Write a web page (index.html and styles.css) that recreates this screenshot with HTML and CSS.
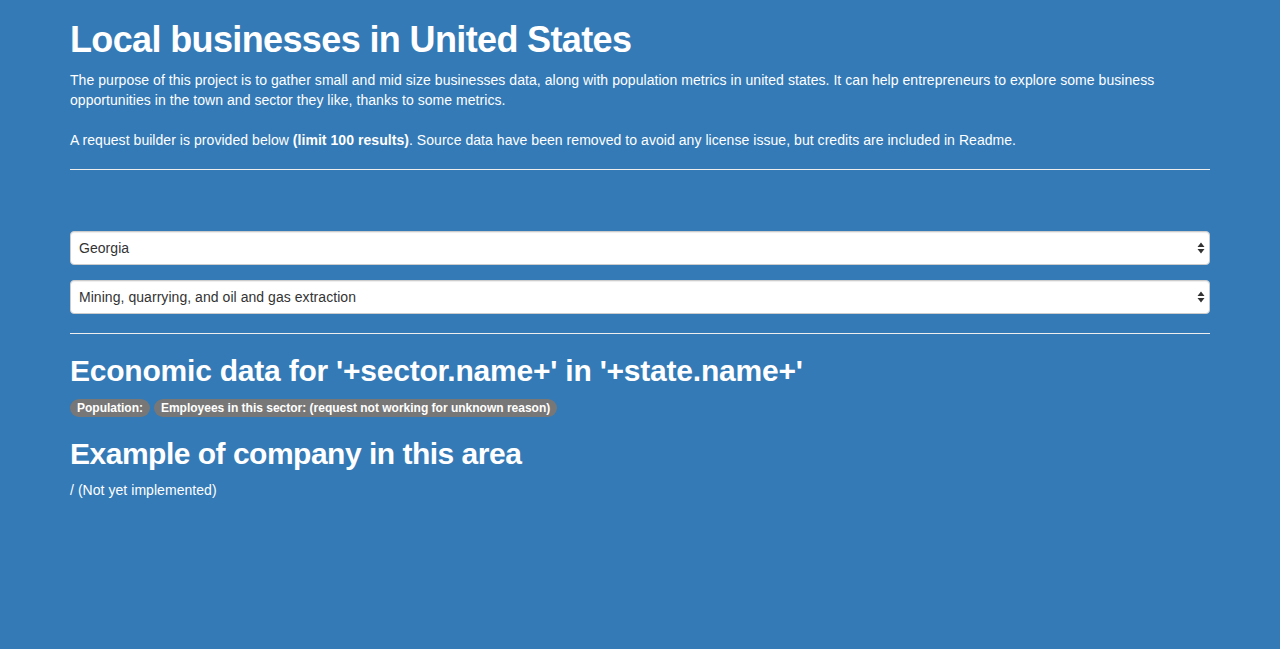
FILE: index.html
```html
<!DOCTYPE html>
<html lang="en">
<head>
<meta charset="utf-8">
<title>Local businesses in United States</title>
<link rel="stylesheet" href="styles.css">
</head>
<body>
<div class="container">
  <h1>Local businesses in United States</h1>
  <p>The purpose of this project is to gather small and mid size businesses data, along with population metrics in united states. It can help entrepreneurs to explore some business opportunities in the town and sector they like, thanks to some metrics.<br><br>A request builder is provided below <strong>(limit 100 results)</strong>. Source data have been removed to avoid any license issue, but credits are included in Readme.</p>
  <hr>
  <form class="builder">
    <select class="form-control">
      <option>Georgia</option>
    </select>
    <select class="form-control">
      <option>Mining, quarrying, and oil and gas extraction</option>
    </select>
  </form>
  <hr>
  <h2>Economic data for '+sector.name+' in '+state.name+'</h2>
  <div class="badges"><span class="badge">Population:</span> <span class="badge">Employees in this sector: (request not working for unknown reason)</span></div>
  <h2 class="tight">Example of company in this area</h2>
  <p>/ (Not yet implemented)</p>
</div>
</body>
</html>
```

FILE: styles.css
```css
html, body {
  margin: 0;
  padding: 0;
}
body {
  background: #337ab7;
  color: #fff;
  font-family: "Liberation Sans", Arial, Helvetica, sans-serif;
  font-size: 14px;
  line-height: 20px;
  min-height: 649px;
}
.container {
  width: 1140px;
  padding: 0 15px;
  margin: 0 auto;
}
p {
  margin: 0 0 10px;
  letter-spacing: 0.05px;
}
h1 {
  font-size: 36px;
  font-weight: 700;
  line-height: 1.1;
  margin: 20px 0 10px;
  letter-spacing: -0.63px;
}
h2 {
  font-size: 30px;
  font-weight: 700;
  line-height: 1.1;
  margin: 20px 0 10px;
  letter-spacing: -0.22px;
}
h2.tight {
  letter-spacing: -0.5px;
}
strong {
  font-weight: 700;
}
hr {
  border: 0;
  border-top: 1px solid #eee;
  margin: 19px 0 20px;
  height: 0;
}
.builder {
  display: flex;
  flex-direction: column;
  gap: 15px;
  padding-top: 41px;
}
.form-control {
  display: block;
  width: 100%;
  height: 34px;
  padding: 6px 24px 6px 8px;
  font-family: "Liberation Sans", Arial, Helvetica, sans-serif;
  font-size: 14px;
  letter-spacing: 0.05px;
  color: #333;
  background-color: #fff;
  background-image: url("data:image/svg+xml;utf8,<svg xmlns='http://www.w3.org/2000/svg' width='8' height='14' viewBox='0 0 8 14'><path d='M4 1.5 L7.5 6 L0.5 6 Z M4 12.5 L7.5 8 L0.5 8 Z' fill='%23333'/></svg>");
  background-repeat: no-repeat;
  background-position: right 4px center;
  border: 1px solid #ccc;
  border-radius: 4px;
  box-shadow: inset 0 1px 1px rgba(0,0,0,.075);
  -webkit-appearance: none;
  appearance: none;
  box-sizing: border-box;
}
.badges {
  line-height: 20px;
}
.badge {
  display: inline-block;
  min-width: 10px;
  padding: 3px 7px;
  font-size: 12px;
  font-weight: 700;
  line-height: 1;
  color: #fff;
  text-align: center;
  white-space: nowrap;
  vertical-align: middle;
  background-color: #777;
  border-radius: 10px;
}
```
